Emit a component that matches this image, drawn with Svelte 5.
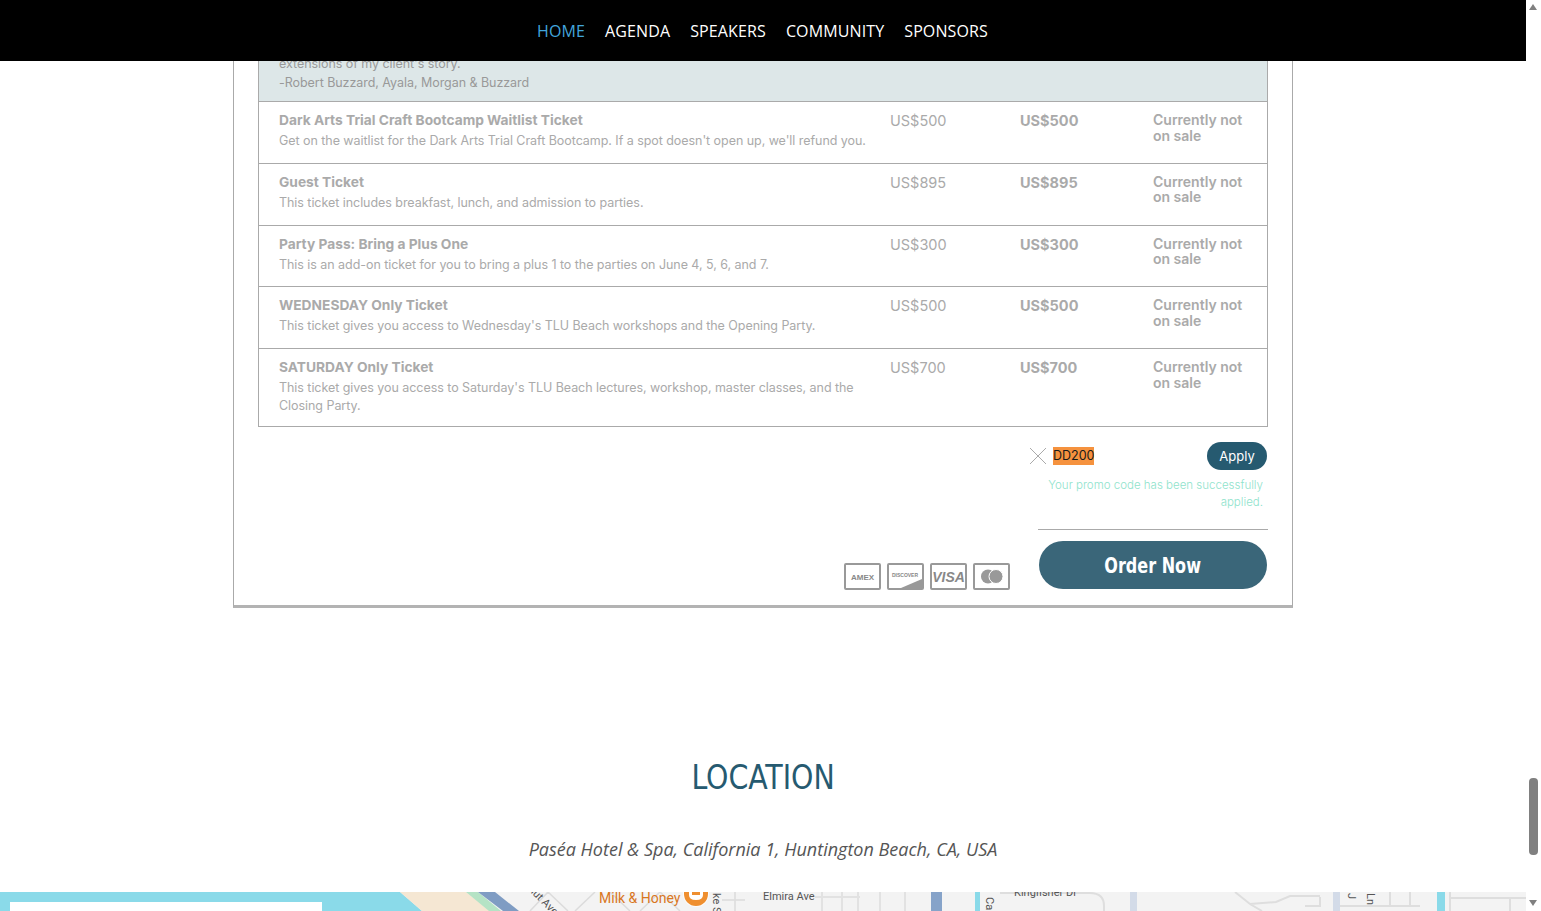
<script>
    const navLinks = ['HOME', 'AGENDA', 'SPEAKERS', 'COMMUNITY', 'SPONSORS'];

    const tickets = [
        {
            name: 'Dark Arts Trial Craft Bootcamp Waitlist Ticket',
            desc: "Get on the waitlist for the Dark Arts Trial Craft Bootcamp. If a spot doesn't open up, we'll refund you.",
            price: 'US$500'
        },
        {
            name: 'Guest Ticket',
            desc: 'This ticket includes breakfast, lunch, and admission to parties.',
            price: 'US$895'
        },
        {
            name: 'Party Pass: Bring a Plus One',
            desc: 'This is an add-on ticket for you to bring a plus 1 to the parties on June 4, 5, 6, and 7.',
            price: 'US$300'
        },
        {
            name: 'WEDNESDAY Only Ticket',
            desc: "This ticket gives you access to Wednesday's TLU Beach workshops and the Opening Party.",
            price: 'US$500'
        },
        {
            name: 'SATURDAY Only Ticket',
            desc: "This ticket gives you access to Saturday's TLU Beach lectures, workshop, master classes, and the Closing Party.",
            price: 'US$700'
        }
    ];
</script>

<div class="page">
    <div class="viewport">
        <nav class="nav">
            {#each navLinks as link, i}
                <a href="#top" class:active={i === 0}>{link}</a>
            {/each}
        </nav>

        <section class="card">
            <div class="table">
                <div class="quote">
                    <p>extensions of my client's story.</p>
                    <p>-Robert Buzzard, Ayala, Morgan &amp; Buzzard</p>
                </div>
                {#each tickets as t}
                    <div class="row">
                        <div class="info">
                            <div class="name">{t.name}</div>
                            <div class="desc">{t.desc}</div>
                        </div>
                        <div class="price">{t.price}</div>
                        <div class="price strong">{t.price}</div>
                        <div class="status">Currently not on sale</div>
                    </div>
                {/each}
            </div>

            <div class="promo">
                <svg class="clear" width="18" height="18" viewBox="0 0 18 18"><path d="M1 1 17 17M17 1 1 17" stroke="#aaa" stroke-width="1" fill="none"/></svg>
                <span class="code">DD200</span>
                <button class="apply">Apply</button>
            </div>
            <p class="success">Your promo code has been successfully applied.</p>

            <div class="checkout">
                <div class="cards">
                    <svg width="37" height="27" viewBox="0 0 37 27"><rect x="1" y="1" width="35" height="25" rx="1" fill="#fff" stroke="#999" stroke-width="2"/><text x="18.5" y="16.5" text-anchor="middle" class="amex">AMEX</text></svg>
                    <svg width="37" height="27" viewBox="0 0 37 27"><rect x="1" y="1" width="35" height="25" rx="1" fill="#fff" stroke="#999" stroke-width="2"/><path d="M14 25 35 16V25Z" fill="#999"/><text x="18" y="14" text-anchor="middle" class="disc">DISCOVER</text></svg>
                    <svg width="37" height="27" viewBox="0 0 37 27"><rect x="1" y="1" width="35" height="25" rx="1" fill="#fff" stroke="#999" stroke-width="2"/><text x="18.5" y="18.5" text-anchor="middle" class="visa">VISA</text></svg>
                    <svg width="37" height="27" viewBox="0 0 37 27"><rect x="1" y="1" width="35" height="25" rx="1" fill="#fff" stroke="#999" stroke-width="2"/><circle cx="15" cy="13.5" r="7" fill="#999"/><circle cx="23" cy="13.5" r="7" fill="#999" stroke="#fff" stroke-width="1"/></svg>
                </div>
                <div class="order">
                    <button class="order-btn"><span>Order Now</span></button>
                </div>
            </div>
        </section>

        <section class="location">
            <h2><span>LOCATION</span></h2>
            <p>Paséa Hotel &amp; Spa, California 1, Huntington Beach, CA, USA</p>
        </section>

        <div class="map">
            <svg width="1526" height="19" viewBox="0 0 1526 19">
                <rect width="1526" height="19" fill="#f3f3f3"/>
                <path d="M0 0H400L422 19H0Z" fill="#8adae9"/>
                <path d="M400 0H466L490 19H422Z" fill="#f5e7d3"/>
                <path d="M466 0H478L501 19H489Z" fill="#b5e3c5"/>
                <path d="M478 0H495L519 19H503Z" fill="#7f9cc3"/>
                <path d="M530 19 548 0M548 0 568 19M575 19 595 0M640 19 660 0M610 0 630 19M660 0 680 19M722 8H745M735 0V19" stroke="#dcdcdc" stroke-width="1.5" fill="none"/>
                <path d="M815 5H860M822 0V19M842 0V19M858 0V19M880 0V19M905 0V19" stroke="#e2e2e2" stroke-width="2" fill="none"/>
                <rect x="931" y="0" width="11" height="19" fill="#86a3c9"/>
                <rect x="975" y="0" width="5" height="19" fill="#8adae9"/>
                <rect x="1130" y="0" width="7" height="19" fill="#d3dbe8"/>
                <rect x="1333" y="0" width="7" height="19" fill="#d3dbe8"/>
                <rect x="1437" y="0" width="8" height="19" fill="#8adae9"/>
                <path d="M1000 1H1090Q1104 1 1104 14V19M1235 0 1250 12 1262 19M1250 12 1276 10 1290 4H1320M1305 14H1320V5M1340 14H1420M1390 0V14M1410 0V14M1450 0V19M1450 6H1526M1510 6V19" stroke="#dedede" stroke-width="2" fill="none"/>
                <circle cx="696" cy="2" r="13" fill="#fff" fill-opacity="0.7"/>
                <path d="M684 0H708V2A12 12 0 0 1 696 14A12 12 0 0 1 684 2Z" fill="#ef8f2f"/>
                <path d="M689 0V3Q689 8 696 8Q703 8 703 3V0H700V3H692V0Z" fill="#fff"/>
                <text x="599" y="11" class="poi">Milk &amp; Honey</text>
                <text x="763" y="8" class="road">Elmira Ave</text>
                <text x="1014" y="4" class="road">Kingfisher Dr</text>
                <text x="986" y="5" class="road" transform="rotate(90 986 5)">Ca</text>
                <text x="713" y="1" class="road" transform="rotate(90 713 1)">ke S</text>
                <text x="528" y="-2" class="road" transform="rotate(45 528 -2)">nut Ave</text>
                <text x="1348" y="1" class="road" transform="rotate(90 1348 1)">J</text>
                <text x="1367" y="1" class="road" transform="rotate(90 1367 1)">Ln</text>
            </svg>
            <div class="map-panel"></div>
        </div>
    </div>

    <div class="scrollbar">
        <span class="arrow up"></span>
        <span class="thumb"></span>
        <span class="arrow down"></span>
    </div>
</div>

<style>
    :global(body) {
        margin: 0;
        background: #fff;
    }

    .page {
        display: flex;
        height: 911px;
        overflow: hidden;
        font-family: Inter, "Liberation Sans", sans-serif;
    }

    .viewport {
        position: relative;
        width: 1526px;
        flex: none;
    }

    .nav {
        position: absolute;
        top: 0;
        left: 0;
        right: 0;
        height: 61px;
        background: #000;
        display: flex;
        justify-content: center;
        align-items: center;
        gap: 20px;
        padding-right: 1px;
        box-sizing: border-box;
        font-family: "Open Sans", sans-serif;
        font-size: 16px;
        letter-spacing: 0.12px;
    }

    .nav a {
        color: #fff;
        text-decoration: none;
    }

    .nav a.active {
        color: #42a5dc;
    }

    .card {
        width: 1060px;
        height: 608px;
        margin: 0 auto;
        box-sizing: border-box;
        border: 1px solid #aaa;
        border-top: 0;
        border-bottom: 3px solid #b3b3b3;
        padding: 0 24px;
    }

    .table {
        border: 1px solid #aaa;
        border-top: 0;
        color: #aaa;
    }

    .quote {
        background: #dde7e8;
        padding: 54px 20px 9px;
        border-bottom: 1px solid #aaa;
        font-size: 12.5px;
        letter-spacing: -0.05px;
        line-height: 19px;
        color: #999;
    }

    .quote p {
        margin: 0;
    }

    .row {
        display: grid;
        grid-template-columns: 611px 130px 133px 1fr;
        padding: 8px 0 11px 20px;
        border-bottom: 1px solid #aaa;
        min-height: 41.75px;
    }

    .row:last-child {
        border-bottom: 0;
    }

    .name {
        font-size: 13.75px;
        font-weight: 700;
        line-height: 20px;
    }

    .desc {
        font-size: 12.5px;
        letter-spacing: -0.05px;
        line-height: 18px;
        margin-top: 2px;
        max-width: 600px;
    }

    .price {
        font-size: 14.5px;
        line-height: 20px;
        padding-top: 1px;
    }

    .price.strong {
        font-weight: 700;
    }

    .status {
        font-size: 14px;
        font-weight: 600;
        line-height: 15.5px;
        padding-top: 2px;
        max-width: 100px;
    }

    .promo {
        display: flex;
        align-items: center;
        height: 28px;
        margin-top: 15px;
        padding-left: 771px;
    }

    .clear {
        margin-right: 6px;
    }

    .code {
        background: #f5923e;
        color: #1a1a1a;
        font-size: 12.5px;
        line-height: 18px;
    }

    .apply {
        margin-left: auto;
        margin-right: 1px;
        width: 60px;
        height: 28px;
        border: 0;
        border-radius: 14px;
        background: #265a70;
        color: #fff;
        font-family: inherit;
        font-size: 13px;
        padding: 0;
    }

    .success {
        margin: 7px 5px 0 auto;
        width: 225px;
        text-align: right;
        color: #8fe3cc;
        font-size: 11.5px;
        font-weight: 300;
        line-height: 17px;
    }

    .checkout {
        display: flex;
        justify-content: flex-end;
        align-items: flex-end;
        gap: 28px;
        margin-top: 18px;
    }

    .cards {
        display: flex;
        gap: 6px;
        margin-bottom: -1px;
    }

    .cards text {
        fill: #888;
        font-family: "Liberation Sans", sans-serif;
        font-weight: 700;
    }

    .cards .amex {
        font-size: 8px;
    }

    .cards .disc {
        font-size: 5px;
    }

    .cards .visa {
        font-size: 14px;
        font-style: italic;
    }

    .order {
        width: 230px;
        box-sizing: border-box;
        border-top: 1px solid #aaa;
        padding: 11px 1px 0;
    }

    .order-btn {
        display: block;
        width: 228px;
        height: 48px;
        border: 0;
        border-radius: 24px;
        background: #3a6679;
        color: #fff;
        font-family: "DejaVu Sans Condensed", sans-serif;
        font-size: 22px;
        font-weight: 700;
        padding: 0;
    }

    .order-btn span {
        display: inline-block;
        transform: scaleX(0.81);
    }

    .location {
        text-align: center;
        padding-top: 147px;
        height: 137px;
    }

    .location h2 {
        margin: 0;
        color: #265a70;
        font-family: "DejaVu Sans Condensed", sans-serif;
        font-size: 34px;
        font-weight: 400;
        line-height: 44px;
    }

    .location h2 span {
        display: inline-block;
        transform: scaleX(0.93);
    }

    .location p {
        margin: 37px 0 0;
        color: #555;
        font-family: "Open Sans", sans-serif;
        font-size: 18px;
        font-style: italic;
        line-height: 26px;
    }

    .map {
        position: relative;
        height: 19px;
        overflow: hidden;
    }

    .map svg {
        display: block;
    }

    .map text {
        font-family: Roboto, sans-serif;
    }

    .road {
        font-size: 11px;
        fill: #555;
    }

    .poi {
        font-size: 14px;
        fill: #d9771f;
    }

    .map-panel {
        position: absolute;
        left: 10px;
        top: 10px;
        width: 312px;
        height: 40px;
        background: #fff;
    }

    .scrollbar {
        flex: none;
        width: 15px;
        height: 911px;
        background: #fff;
        position: relative;
    }

    .arrow {
        position: absolute;
        left: 3px;
        width: 0;
        height: 0;
        border-left: 4.5px solid transparent;
        border-right: 4.5px solid transparent;
    }

    .arrow.up {
        top: 4px;
        border-bottom: 6px solid #808080;
    }

    .arrow.down {
        bottom: 5px;
        border-top: 6px solid #808080;
    }

    .thumb {
        position: absolute;
        left: 3px;
        top: 778px;
        width: 9px;
        height: 77px;
        border-radius: 4px;
        background: #808080;
    }
</style>
